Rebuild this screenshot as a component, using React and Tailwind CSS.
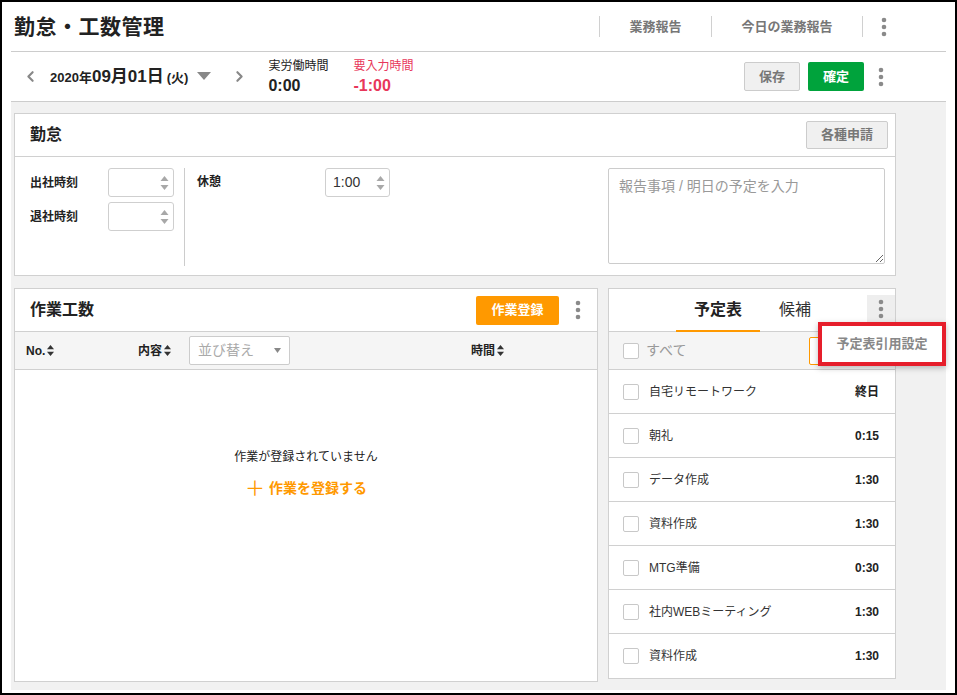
import React from "react";
import { ChevronLeft, ChevronRight } from "lucide-react";

const Kebab = ({ className = "" }) => (
  <svg width="6" height="20" viewBox="0 0 6 20" className={className}>
    <circle cx="3" cy="3" r="2.3" fill="#8a8a8a" />
    <circle cx="3" cy="10" r="2.3" fill="#8a8a8a" />
    <circle cx="3" cy="17" r="2.3" fill="#8a8a8a" />
  </svg>
);

const SortIcon = () => (
  <svg width="7" height="11" viewBox="0 0 7 11" className="ml-[2px]">
    <path d="M3.5 0 L7 4.3 L0 4.3 Z" fill="#333" />
    <path d="M3.5 11 L7 6.7 L0 6.7 Z" fill="#333" />
  </svg>
);

const Spinner = () => (
  <svg width="9" height="16" viewBox="0 0 9 16">
    <path d="M4.5 1 L8.5 6 L0.5 6 Z" fill="#a8a8a8" />
    <path d="M4.5 15 L8.5 10 L0.5 10 Z" fill="#a8a8a8" />
  </svg>
);

const TimeInput = ({ value, w = "w-[66px]" }) => (
  <div className={`${w} h-[29px] border border-[#cfcfcf] rounded-[3px] flex items-center justify-between pl-[7px] pr-[4px] bg-white`}>
    <span className="text-[14px] text-[#333]">{value}</span>
    <Spinner />
  </div>
);

const Checkbox = () => (
  <div className="w-[16px] h-[16px] border border-[#c8c8c8] rounded-[2px] bg-white shrink-0" />
);

const schedule = [
  { name: "自宅リモートワーク", time: "終日" },
  { name: "朝礼", time: "0:15" },
  { name: "データ作成", time: "1:30" },
  { name: "資料作成", time: "1:30" },
  { name: "MTG準備", time: "0:30" },
  { name: "社内WEBミーティング", time: "1:30" },
  { name: "資料作成", time: "1:30" },
];

export default function App() {
  return (
    <div className="w-[957px] h-[695px] border-2 border-black bg-white px-[9px] pb-[3px] flex flex-col font-['Liberation_Sans','Noto_Sans_CJK_JP',sans-serif] text-[#333] overflow-hidden">
      {/* タイトル行 */}
      <div className="h-[50px] border-b border-[#cccccc] flex items-center shrink-0">
        <h1 className="pl-[3px] text-[21px] font-bold text-[#222] tracking-[0.5px]">勤怠・工数管理</h1>
        <div className="ml-auto flex items-center h-full">
          <div className="w-px h-[21px] bg-[#d0d0d0]" />
          <span className="w-[111px] text-center text-[13px] font-bold text-[#777]">業務報告</span>
          <div className="w-px h-[21px] bg-[#d0d0d0]" />
          <span className="w-[150px] text-center text-[13px] font-bold text-[#777]">今日の業務報告</span>
          <div className="w-px h-[21px] bg-[#d0d0d0]" />
          <div className="w-[41px] flex justify-center">
            <Kebab />
          </div>
          <div className="w-[42px]" />
        </div>
      </div>

      {/* 日付行 */}
      <div className="h-[50px] border-b border-[#cccccc] flex items-center shrink-0">
        <ChevronLeft size={17} strokeWidth={3} className="text-[#888] ml-[11px]" />
        <div className="ml-[11px] font-bold text-[#222] flex items-baseline">
          <span className="text-[13px]">2020年</span>
          <span className="text-[17px]">09月01日</span>
          <span className="text-[13px] ml-[3px]">(火)</span>
        </div>
        <svg width="14" height="9" viewBox="0 0 14 9" className="ml-[9px]">
          <path d="M0 0 L14 0 L7 8 Z" fill="#888" />
        </svg>
        <ChevronRight size={17} strokeWidth={3} className="text-[#888] ml-[20px]" />
        <div className="ml-[20px] flex flex-col leading-none">
          <span className="text-[12px] text-[#222]">実労働時間</span>
          <span className="text-[16px] font-bold text-[#222] mt-[6px]">0:00</span>
        </div>
        <div className="ml-[25px] flex flex-col leading-none">
          <span className="text-[12px] text-[#e8375a]">要入力時間</span>
          <span className="text-[16px] font-bold text-[#e8375a] mt-[6px]">-1:00</span>
        </div>
        <div className="ml-auto flex items-center">
          <button className="w-[56px] h-[29px] border border-[#cccccc] bg-[#f0f0f0] rounded-[2px] text-[13px] font-bold text-[#777]">保存</button>
          <button className="w-[56px] h-[29px] bg-[#00a33c] rounded-[2px] text-[13px] font-bold text-white ml-[8px]">確定</button>
          <div className="w-[34px] flex justify-center">
            <Kebab />
          </div>
          <div className="w-[48px]" />
        </div>
      </div>

      {/* 本体 */}
      <div className="flex-1 bg-[#f1f1f1] pt-[11px] pl-[3px] pr-[50px] flex flex-col gap-[12px] min-h-0">
        {/* 勤怠カード */}
        <div className="h-[163px] bg-white border border-[#d0d0d0] flex flex-col shrink-0">
          <div className="h-[43px] border-b border-[#d0d0d0] flex items-center pl-[15px] pr-[7px]">
            <span className="text-[16px] font-bold text-[#222]">勤怠</span>
            <button className="ml-auto w-[82px] h-[28px] border border-[#cccccc] bg-[#f0f0f0] rounded-[2px] text-[13px] font-bold text-[#777]">各種申請</button>
          </div>
          <div className="flex-1 flex pt-[11px] pb-[9px]">
            <div className="w-[170px] border-r border-[#cccccc] pl-[15px] flex flex-col gap-[5px]">
              <div className="flex items-center">
                <span className="w-[78px] text-[12px] font-bold text-[#222]">出社時刻</span>
                <TimeInput value="" />
              </div>
              <div className="flex items-center">
                <span className="w-[78px] text-[12px] font-bold text-[#222]">退社時刻</span>
                <TimeInput value="" />
              </div>
            </div>
            <div className="pl-[12px] flex items-start">
              <span className="w-[128px] text-[12px] font-bold text-[#222] leading-[29px]">休憩</span>
              <TimeInput value="1:00" w="w-[65px]" />
            </div>
            <textarea
              className="ml-auto mr-[10px] w-[277px] h-[96px] border border-[#cccccc] rounded-[2px] px-[10px] py-[7px] text-[14px] text-[#333] placeholder:text-[#999] outline-none"
              placeholder="報告事項 / 明日の予定を入力"
            />
          </div>
        </div>

        {/* 下段 */}
        <div className="flex gap-[10px] items-start">
          {/* 作業工数 */}
          <div className="w-[584px] h-[394px] bg-white border border-[#d0d0d0] flex flex-col">
            <div className="h-[43px] border-b border-[#d0d0d0] flex items-center pl-[15px] shrink-0">
              <span className="text-[16px] font-bold text-[#222]">作業工数</span>
              <button className="ml-auto w-[83px] h-[29px] bg-[#ff9900] rounded-[2px] text-[13px] font-bold text-white">作業登録</button>
              <div className="w-[38px] flex justify-center">
                <Kebab />
              </div>
            </div>
            <div className="h-[38px] bg-[#f5f5f5] border-b border-[#d0d0d0] flex items-center shrink-0">
              <span className="ml-[11px] w-[112px] flex items-center text-[12px] font-bold text-[#222]">
                No.<SortIcon />
              </span>
              <span className="flex items-center text-[12px] font-bold text-[#222]">
                内容<SortIcon />
              </span>
              <div className="ml-[18px] w-[101px] h-[29px] border border-[#cccccc] rounded-[2px] bg-white flex items-center justify-between px-[8px]">
                <span className="text-[14px] text-[#aaa]">並び替え</span>
                <svg width="7" height="5" viewBox="0 0 7 5">
                  <path d="M0 0 L7 0 L3.5 5 Z" fill="#888" />
                </svg>
              </div>
              <span className="ml-[181px] flex items-center text-[12px] font-bold text-[#222]">
                時間<SortIcon />
              </span>
            </div>
            <div className="flex flex-col items-center pt-[78px]">
              <span className="text-[12px] text-[#222]">作業が登録されていません</span>
              <span className="mt-[12px] text-[14px] font-bold text-[#ff9900] flex items-center">
                <span className="text-[20px] font-normal leading-none mr-[4px]">＋</span>作業を登録する
              </span>
            </div>
          </div>

          {/* 予定表 */}
          <div className="relative w-[288px] bg-white border border-[#d0d0d0] flex flex-col">
            <div className="h-[43px] border-b border-[#d0d0d0] flex items-stretch">
              <div className="ml-[67px] w-[84px] border-b-2 border-[#ff9900] -mb-px flex items-center justify-center text-[16px] font-bold text-[#222]">予定表</div>
              <div className="w-[70px] flex items-center justify-center text-[16px] text-[#333]">候補</div>
              <div className="ml-auto self-start mt-[6px] w-[28px] h-[28px] bg-[#eeeeee] flex items-center justify-center">
                <Kebab />
              </div>
            </div>
            <div className="h-[38px] bg-[#f5f5f5] border-b border-[#d0d0d0] flex items-center pl-[14px] pr-[14px]">
              <Checkbox />
              <span className="ml-[7px] text-[14px] text-[#999]">すべて</span>
              <div className="ml-auto w-[72px] h-[28px] border border-[#ff9900] rounded-[2px] bg-white" />
            </div>
            {schedule.map((s, i) => (
              <div
                key={i}
                className={`h-[44px] flex items-center pl-[14px] pr-[16px] ${i < schedule.length - 1 ? "border-b border-[#d0d0d0]" : ""}`}
              >
                <Checkbox />
                <span className="ml-[10px] text-[12px] text-[#333]">{s.name}</span>
                <span className="ml-auto text-[12px] font-bold text-[#222]">{s.time}</span>
              </div>
            ))}

            {/* ポップアップ */}
            <div className="absolute left-[209px] top-[33px] w-[128px] h-[44px] bg-white border-4 border-[#e61e2b] shadow-[0_2px_6px_rgba(0,0,0,0.25)] flex items-center justify-center">
              <span className="text-[13px] font-bold text-[#888]">予定表引用設定</span>
            </div>
          </div>
        </div>
      </div>
    </div>
  );
}
